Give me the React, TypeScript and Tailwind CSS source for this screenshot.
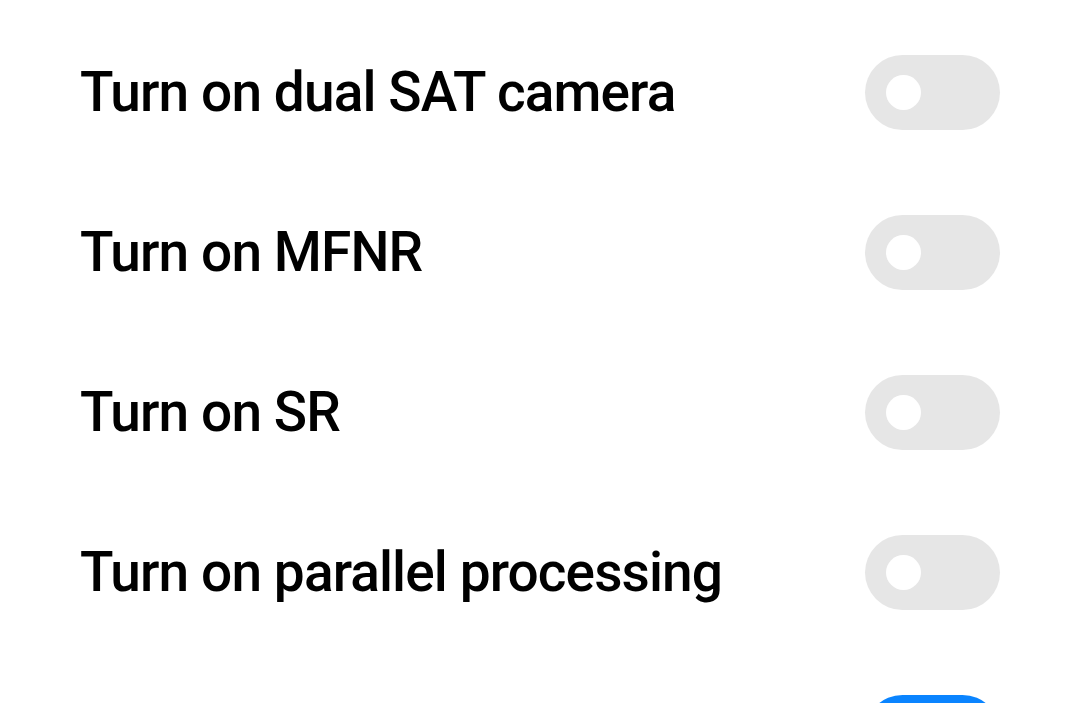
const settings = [
  { label: "Turn on dual SAT camera", on: false },
  { label: "Turn on MFNR", on: false },
  { label: "Turn on SR", on: false },
  { label: "Turn on parallel processing", on: false },
  { label: "", on: true },
];

function Toggle({ on }: { on: boolean }) {
  return (
    <div
      className={
        on
          ? "flex h-[75px] w-[135px] items-center justify-end rounded-full bg-[#0a84ff] px-[21px]"
          : "flex h-[75px] w-[135px] items-center rounded-full bg-[#e6e6e6] px-[21px]"
      }
    >
      <div className="h-[35px] w-[35px] rounded-full bg-white" />
    </div>
  );
}

export default function App() {
  return (
    <div className="h-[703px] w-[1080px] overflow-hidden bg-white pt-[12px] font-['Roboto',sans-serif]">
      {settings.map((s, i) => (
        <div key={i} className="flex h-[160px] items-center justify-between pl-[80px] pr-[80px]">
          <span className="text-[55px] font-medium leading-none tracking-[-0.9px] text-black">{s.label}</span>
          <Toggle on={s.on} />
        </div>
      ))}
    </div>
  );
}
